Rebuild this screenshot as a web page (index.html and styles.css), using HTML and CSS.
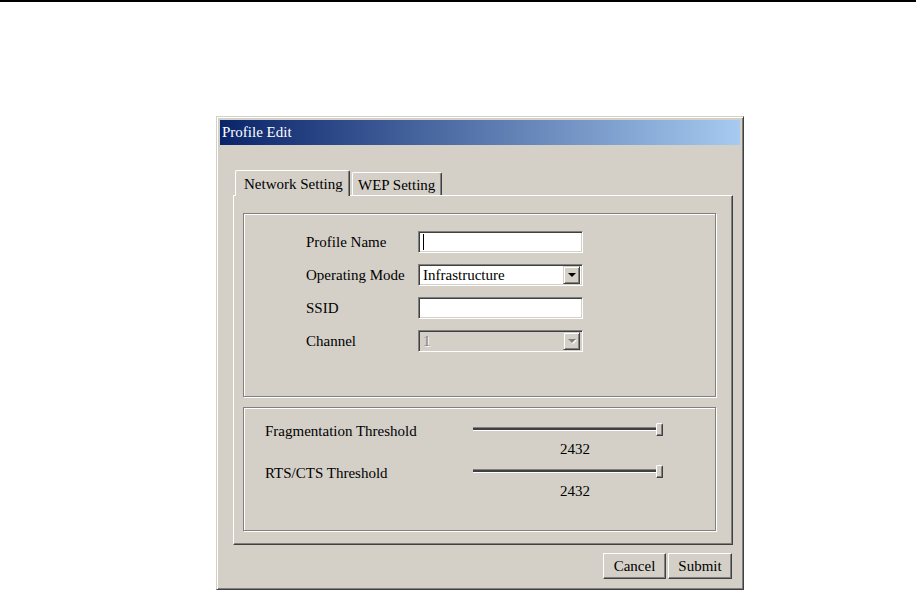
FILE: index.html
```html
<!DOCTYPE html>
<html lang="en">
<head>
    <meta charset="UTF-8">
    <meta name="viewport" content="width=device-width, initial-scale=1.0">
    <title>Profile Edit</title>
    <link rel="stylesheet" href="styles.css">
</head>
<body>
    <div class="rule"></div>
    <div class="dialog">
        <div class="titlebar">Profile Edit</div>
        <div class="tabs">
            <div class="tab active">Network Setting</div>
            <div class="tab">WEP Setting</div>
        </div>
        <div class="panel">
            <div class="group network">
                <div class="row">
                    <label class="label">Profile Name</label>
                    <div class="field"><span class="caret"></span></div>
                </div>
                <div class="row">
                    <label class="label">Operating Mode</label>
                    <div class="field combo">
                        <span class="combo-text">Infrastructure</span>
                        <span class="drop"><span class="arrow"></span></span>
                    </div>
                </div>
                <div class="row">
                    <label class="label">SSID</label>
                    <div class="field"></div>
                </div>
                <div class="row">
                    <label class="label">Channel</label>
                    <div class="field combo disabled">
                        <span class="combo-text">1</span>
                        <span class="drop"><span class="arrow"></span></span>
                    </div>
                </div>
            </div>
            <div class="group thresholds">
                <div class="slider-row">
                    <div class="slider-label">Fragmentation Threshold</div>
                    <div class="slider">
                        <div class="track-area">
                            <div class="track"></div>
                            <div class="thumb"></div>
                        </div>
                        <div class="value">2432</div>
                    </div>
                </div>
                <div class="slider-row second">
                    <div class="slider-label">RTS/CTS Threshold</div>
                    <div class="slider">
                        <div class="track-area">
                            <div class="track"></div>
                            <div class="thumb"></div>
                        </div>
                        <div class="value">2432</div>
                    </div>
                </div>
            </div>
        </div>
        <div class="buttons">
            <button class="btn cancel">Cancel</button>
            <button class="btn submit">Submit</button>
        </div>
    </div>
</body>
</html>
```

FILE: styles.css
```css
body {
    margin: 0;
    background: #fff;
    font-family: "Liberation Serif", "Times New Roman", serif;
    font-size: 15px;
    color: #000;
}
.rule {
    height: 2px;
    background: #000;
}
.dialog {
    width: 528px;
    height: 474px;
    margin: 114px 0 0 216px;
    box-sizing: border-box;
    padding: 3px;
    background: #d4d0c8;
    border: 1px solid;
    border-color: #d4d0c8 #404040 #404040 #d4d0c8;
    box-shadow: inset 1px 1px #fff, inset -1px -1px #808080;
}
.titlebar {
    height: 25px;
    line-height: 25px;
    padding-left: 2px;
    color: #fff;
    background: linear-gradient(to right, #0a246a, #a6caf0);
}
.tabs {
    display: flex;
    align-items: flex-end;
    height: 25px;
    margin: 25px 0 0 13px;
}
.tab {
    box-sizing: border-box;
    height: 23px;
    width: 90px;
    margin-left: 2px;
    padding: 3px 0 0 5px;
    line-height: 18px;
    background: #d4d0c8;
    border: 1px solid;
    border-bottom: none;
    border-color: #fff #404040 #404040 #fff;
    border-radius: 2px 2px 0 0;
    box-shadow: inset -1px 0 #808080;
}
.tab.active {
    position: relative;
    z-index: 1;
    width: 115px;
    height: 26px;
    margin-bottom: -1px;
    padding: 4px 0 0 8px;
}
.panel {
    box-sizing: border-box;
    width: 500px;
    height: 350px;
    margin-left: 13px;
    padding: 17px 0 0 9px;
    border: 1px solid;
    border-color: #fff #404040 #404040 #fff;
    box-shadow: inset -1px -1px #808080;
}
.group {
    box-sizing: border-box;
    width: 473px;
    border: 1px solid #808080;
    box-shadow: inset 1px 1px #fff, 1px 1px #fff;
}
.network {
    height: 184px;
    padding: 17px 0 0 62px;
}
.row {
    display: flex;
    align-items: center;
    height: 22px;
    margin-bottom: 11px;
}
.label {
    width: 112px;
}
.field {
    display: flex;
    align-items: center;
    box-sizing: border-box;
    width: 165px;
    height: 22px;
    padding: 2px;
    background: #fff;
    border: 1px solid;
    border-color: #808080 #fff #fff #808080;
    box-shadow: inset 1px 1px #404040, inset -1px -1px #d4d0c8;
}
.caret {
    width: 1px;
    height: 16px;
    margin-left: 2px;
    background: #000;
}
.combo-text {
    flex: 1;
    padding-left: 2px;
    line-height: 18px;
}
.drop {
    display: flex;
    align-items: center;
    justify-content: center;
    box-sizing: border-box;
    width: 17px;
    height: 18px;
    background: #d4d0c8;
    border: 1px solid;
    border-color: #d4d0c8 #404040 #404040 #d4d0c8;
    box-shadow: inset 1px 1px #fff, inset -1px -1px #808080;
}
.arrow {
    width: 0;
    height: 0;
    border-left: 4px solid transparent;
    border-right: 4px solid transparent;
    border-top: 4px solid #000;
}
.disabled {
    background: #d4d0c8;
}
.disabled .combo-text {
    color: #808080;
    text-shadow: 1px 1px #fff;
}
.disabled .arrow {
    border-top-color: #808080;
    filter: drop-shadow(1px 1px 0 #fff);
}
.thresholds {
    height: 124px;
    margin-top: 10px;
    padding: 14px 0 0 21px;
}
.slider-row {
    display: flex;
}
.slider-row.second {
    margin-top: 6px;
}
.slider-label {
    width: 208px;
    line-height: 18px;
}
.slider {
    width: 195px;
}
.track-area {
    position: relative;
    height: 18px;
}
.track {
    position: absolute;
    top: 5px;
    left: 0;
    width: 185px;
    height: 2px;
    border-top: 1px solid #808080;
    border-bottom: 1px solid #fff;
    background: #404040;
}
.thumb {
    position: absolute;
    top: 1px;
    left: 183px;
    box-sizing: border-box;
    width: 7px;
    height: 13px;
    background: #d4d0c8;
    border: 1px solid;
    border-color: #fff #404040 #404040 #fff;
    border-radius: 2px 2px 1px 1px;
    box-shadow: inset -1px -1px #808080;
}
.value {
    padding-left: 87px;
    line-height: 18px;
}
.buttons {
    display: flex;
    justify-content: flex-end;
    gap: 2px;
    margin-top: 8px;
    padding-right: 8px;
}
.btn {
    box-sizing: border-box;
    height: 26px;
    padding: 0;
    font-family: inherit;
    font-size: 15px;
    color: #000;
    background: #d4d0c8;
    border: 1px solid;
    border-color: #fff #404040 #404040 #fff;
    box-shadow: inset -1px -1px #808080;
}
.cancel {
    width: 63px;
}
.submit {
    width: 64px;
}
```
